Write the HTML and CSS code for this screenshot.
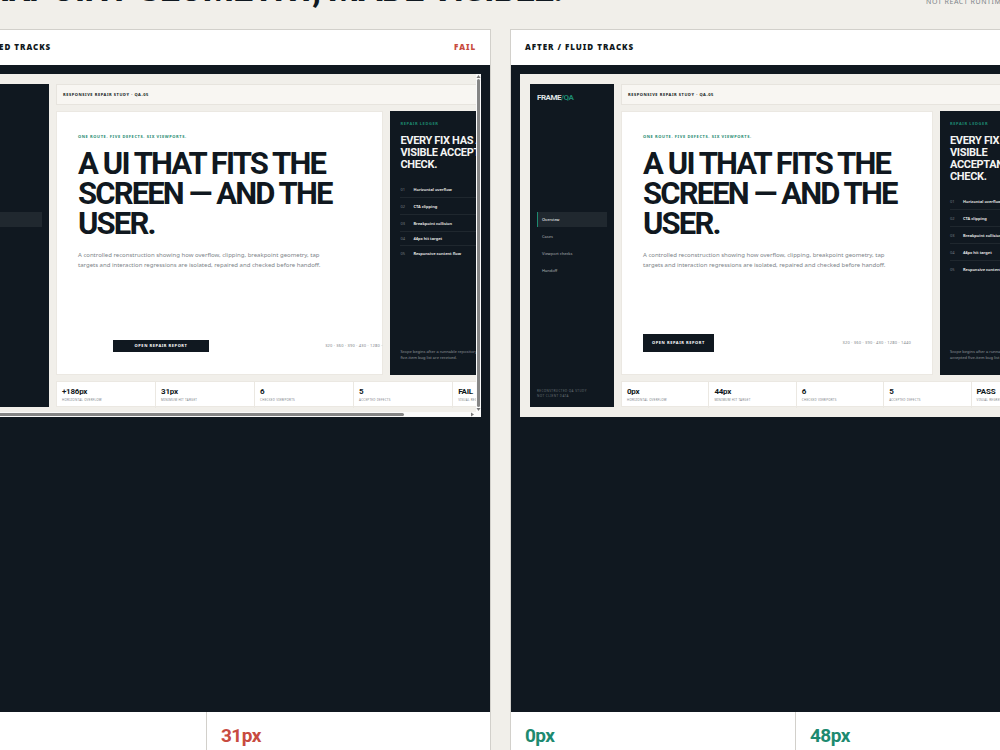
FILE: index.html
```
<!DOCTYPE html>
<html lang="en">
<head>
    <meta charset="UTF-8">
    <meta name="viewport" content="width=device-width, initial-scale=1.0">
    <title>Frame/QA - Breakpoint Geometry</title>
    <link rel="stylesheet" href="styles.css">
</head>
<body>
    <main class="board">
        <header class="board-header">
            <h1>BREAKPOINT GEOMETRY, MADE VISIBLE.</h1>
            <p class="board-note">NOT REACT RUNTIME</p>
        </header>

        <div class="comparison">
            <!-- Before -->
            <section class="panel">
                <div class="panel-header">
                    <h2>BEFORE / FIXED TRACKS</h2>
                    <span class="fail">FAIL</span>
                </div>
                <div class="stage">
                    <div class="preview preview-scroll">
                        <div class="viewport">
                            <div class="app app-fixed">
                                <aside class="sidebar">
                                    <div class="brand">FRAME<span>/QA</span></div>
                                    <nav class="nav">
                                        <a class="active" href="#">Overview</a>
                                        <a href="#">Cases</a>
                                        <a href="#">Viewport checks</a>
                                        <a href="#">Handoff</a>
                                    </nav>
                                    <p class="side-note">RECONSTRUCTED QA STUDY<br>NOT CLIENT DATA</p>
                                </aside>
                                <div class="content">
                                    <div class="topbar">RESPONSIVE REPAIR STUDY · QA-05</div>
                                    <div class="tracks">
                                        <article class="hero">
                                            <p class="eyebrow">ONE ROUTE. FIVE DEFECTS. SIX VIEWPORTS.</p>
                                            <h3>A UI THAT FITS THE<br>SCREEN — AND THE<br>USER.</h3>
                                            <p class="lead">A controlled reconstruction showing how overflow, clipping, breakpoint geometry, tap<br>targets and interaction regressions are isolated, repaired and checked before handoff.</p>
                                            <div class="hero-footer">
                                                <button class="report">OPEN REPAIR REPORT</button>
                                                <span class="sizes">320 · 360 · 390 · 430 · 1280 ·</span>
                                            </div>
                                        </article>
                                        <aside class="ledger">
                                            <p class="eyebrow">REPAIR LEDGER</p>
                                            <h4>EVERY FIX HAS A<br>VISIBLE ACCEPTANCE<br>CHECK.</h4>
                                            <ol>
                                                <li><span>01</span>Horizontal overflow</li>
                                                <li><span>02</span>CTA clipping</li>
                                                <li><span>03</span>Breakpoint collision</li>
                                                <li class="tight"><span>04</span>44px hit target</li>
                                                <li class="tight"><span>05</span>Responsive content flow</li>
                                            </ol>
                                            <p class="scope">Scope begins after a runnable repository, accepted<br>five-item bug list are received.</p>
                                        </aside>
                                    </div>
                                    <div class="metrics">
                                        <div><strong>+186px</strong><small>HORIZONTAL OVERFLOW</small></div>
                                        <div><strong>31px</strong><small>MINIMUM HIT TARGET</small></div>
                                        <div><strong>6</strong><small>CHECKED VIEWPORTS</small></div>
                                        <div><strong>5</strong><small>ACCEPTED DEFECTS</small></div>
                                        <div><strong>FAIL</strong><small>VISUAL REGRESSION</small></div>
                                    </div>
                                </div>
                            </div>
                        </div>
                        <div class="bar-y">
                            <svg viewBox="0 0 5 5"><path d="M0.5 4 2.5 1 4.5 4Z"/></svg>
                            <div class="thumb"></div>
                            <svg viewBox="0 0 5 5"><path d="M0.5 1 2.5 4 4.5 1Z"/></svg>
                        </div>
                        <div class="bar-x">
                            <div class="thumb"></div>
                            <svg viewBox="0 0 5 5"><path d="M1 0.5 4 2.5 1 4.5Z"/></svg>
                        </div>
                    </div>
                </div>
                <div class="results fail">
                    <div>186px</div>
                    <div>31px</div>
                </div>
            </section>

            <!-- After -->
            <section class="panel">
                <div class="panel-header">
                    <h2>AFTER / FLUID TRACKS</h2>
                    <span class="pass">PASS</span>
                </div>
                <div class="stage">
                    <div class="preview">
                        <div class="app">
                            <aside class="sidebar">
                                <div class="brand">FRAME<span>/QA</span></div>
                                <nav class="nav">
                                    <a class="active" href="#">Overview</a>
                                    <a href="#">Cases</a>
                                    <a href="#">Viewport checks</a>
                                    <a href="#">Handoff</a>
                                </nav>
                                <p class="side-note">RECONSTRUCTED QA STUDY<br>NOT CLIENT DATA</p>
                            </aside>
                            <div class="content">
                                <div class="topbar">RESPONSIVE REPAIR STUDY · QA-05</div>
                                <div class="tracks">
                                    <article class="hero">
                                        <p class="eyebrow">ONE ROUTE. FIVE DEFECTS. SIX VIEWPORTS.</p>
                                        <h3>A UI THAT FITS THE<br>SCREEN — AND THE<br>USER.</h3>
                                        <p class="lead">A controlled reconstruction showing how overflow, clipping, breakpoint geometry, tap<br>targets and interaction regressions are isolated, repaired and checked before handoff.</p>
                                        <div class="hero-footer">
                                            <button class="report">OPEN REPAIR REPORT</button>
                                            <span class="sizes">320 · 360 · 390 · 430 · 1280 · 1440</span>
                                        </div>
                                    </article>
                                    <aside class="ledger">
                                        <p class="eyebrow">REPAIR LEDGER</p>
                                        <h4>EVERY FIX HAS A VISIBLE ACCEPTANCE CHECK.</h4>
                                        <ol>
                                            <li><span>01</span>Horizontal overflow</li>
                                            <li><span>02</span>CTA clipping</li>
                                            <li><span>03</span>Breakpoint collision</li>
                                            <li><span>04</span>44px hit target</li>
                                            <li><span>05</span>Responsive content flow</li>
                                        </ol>
                                        <p class="scope">Scope begins after a runnable repository,<br>accepted five-item bug list are received.</p>
                                    </aside>
                                </div>
                                <div class="metrics">
                                    <div><strong>0px</strong><small>HORIZONTAL OVERFLOW</small></div>
                                    <div><strong>44px</strong><small>MINIMUM HIT TARGET</small></div>
                                    <div><strong>6</strong><small>CHECKED VIEWPORTS</small></div>
                                    <div><strong>5</strong><small>ACCEPTED DEFECTS</small></div>
                                    <div><strong>PASS</strong><small>VISUAL REGRESSION</small></div>
                                </div>
                            </div>
                        </div>
                    </div>
                </div>
                <div class="results pass">
                    <div>0px</div>
                    <div>48px</div>
                </div>
            </section>
        </div>
    </main>
</body>
</html>
```
FILE: styles.css
```
:root {
    --ink: #101820;
    --paper: #f1efea;
    --line: #d2d0cb;
    --muted: #7d8489;
    --red: #c84b40;
    --green: #1d8a70;
    --display: Roboto, "Liberation Sans", sans-serif;
}

* {
    box-sizing: border-box;
    margin: 0;
    padding: 0;
}

body {
    font-family: "Noto Sans", "Open Sans", sans-serif;
    background-color: var(--paper);
    color: var(--ink);
    height: 100vh;
    overflow: hidden;
}

/* The board runs past the window on every side */
.board {
    margin: -40px -80px 0 -79px;
}

.board-header {
    display: flex;
    justify-content: space-between;
    align-items: flex-end;
    height: 69px;
    padding-bottom: 19px;
}

h1 {
    font-family: var(--display);
    font-size: 36px;
    line-height: 42px;
    letter-spacing: -0.03em;
    white-space: nowrap;
}

.board-note {
    width: 154px;
    padding-bottom: 3px;
    font-size: 7px;
    line-height: 10px;
    letter-spacing: 0.08em;
    color: var(--muted);
}

.comparison {
    display: grid;
    grid-template-columns: 1fr 1fr;
    gap: 19px;
}

.panel {
    min-width: 0;
    background: #fff;
    border: 1px solid var(--line);
}

.panel-header {
    display: flex;
    justify-content: space-between;
    align-items: center;
    height: 35px;
    padding: 0 14px 2px;
    font-size: 8px;
    font-weight: 900;
    letter-spacing: 0.12em;
}

.panel-header h2 {
    font-size: 8px;
    font-weight: 900;
}

.fail {
    color: var(--red);
}

.pass {
    color: var(--green);
}

.stage {
    min-height: 647px;
    padding: 9px;
    background: var(--ink);
}

.preview {
    aspect-ratio: 1440 / 898;
    background: var(--paper);
    overflow: hidden;
}

.preview-scroll {
    display: grid;
    grid-template-columns: 1fr 5px;
    grid-template-rows: 1fr 5px;
}

.viewport {
    min-width: 0;
    min-height: 0;
    overflow: hidden;
}

.bar-y,
.bar-x {
    display: flex;
    align-items: center;
    background: #fafafa;
}

.bar-y {
    flex-direction: column;
}

.bar-x {
    grid-column: 1 / 3;
    padding-right: 6px;
}

.thumb {
    background: #858585;
    border-radius: 2px;
}

.bar-y .thumb {
    flex: 1;
    width: 3px;
}

.bar-x .thumb {
    width: 87%;
    height: 3px;
}

.bar-x svg {
    margin-left: auto;
}

.bar-y svg,
.bar-x svg {
    width: 5px;
    height: 5px;
    fill: #777;
}

/* Miniature app */
.app {
    display: grid;
    grid-template-columns: 84px 1fr;
    gap: 7px;
    height: 100%;
    padding: 10px;
}

.app-fixed {
    width: 116%;
    grid-template-columns: 108px 1fr;
    padding-bottom: 5px;
}

.sidebar {
    display: flex;
    flex-direction: column;
    justify-content: space-between;
    padding: 8px 7px;
    background: var(--ink);
    color: #dfe2e3;
}

.brand {
    font-family: var(--display);
    font-size: 8px;
    line-height: 11px;
    font-weight: bold;
    letter-spacing: -0.06em;
}

.brand span {
    color: var(--green);
}

.nav a {
    display: flex;
    align-items: center;
    height: 15px;
    margin-bottom: 2px;
    padding-left: 5px;
    font-size: 4px;
    color: #aeb3b6;
    text-decoration: none;
}

.nav .active {
    padding-left: 4px;
    background: #20282f;
    border-left: 1px solid var(--green);
    color: #fff;
}

.side-note {
    font-size: 3px;
    line-height: 5px;
    letter-spacing: 0.15em;
    color: #6a7277;
}

.content {
    display: grid;
    grid-template-rows: 21px 1fr 26px;
    gap: 6px;
    min-width: 0;
}

.topbar {
    display: flex;
    align-items: center;
    padding-left: 6px;
    background: #f8f6f2;
    border: 1px solid #e7e4de;
    font-size: 4px;
    font-weight: 700;
    letter-spacing: 0.14em;
}

.tracks {
    display: grid;
    grid-template-columns: 312fr 120fr;
    gap: 7px;
}

.app-fixed .tracks {
    grid-template-columns: 326fr 162fr;
}

.hero {
    display: flex;
    flex-direction: column;
    min-width: 0;
    padding: 22px 21px;
    background: #fff;
    border: 1px solid #ebe8e2;
}

.eyebrow {
    font-size: 4px;
    line-height: 6px;
    font-weight: 700;
    letter-spacing: 0.15em;
    color: var(--green);
    white-space: nowrap;
}

.hero h3 {
    margin-top: 9px;
    font-family: var(--display);
    font-size: 31px;
    line-height: 30px;
    letter-spacing: -0.06em;
    white-space: nowrap;
}

.lead {
    margin-top: 11px;
    font-size: 6px;
    line-height: 10px;
    color: var(--muted);
    white-space: nowrap;
}

.hero-footer {
    display: flex;
    justify-content: space-between;
    align-items: center;
    margin-top: auto;
}

.report {
    height: 18px;
    padding: 0 9px;
    background: var(--ink);
    border: none;
    color: #fff;
    font-family: inherit;
    font-size: 4px;
    font-weight: 700;
    letter-spacing: 0.14em;
    cursor: pointer;
}

.app-fixed .report {
    width: 96px;
    height: 12px;
    margin-left: 35px;
}

.app-fixed .hero-footer {
    margin-right: -21px;
}

.sizes {
    font-size: 4px;
    letter-spacing: 0.05em;
    color: var(--muted);
    white-space: nowrap;
}

.ledger {
    display: flex;
    flex-direction: column;
    min-width: 0;
    padding: 10px;
    background: var(--ink);
    color: #f4f4f2;
}

.ledger h4 {
    margin-top: 8px;
    font-family: var(--display);
    font-size: 11px;
    line-height: 12px;
    letter-spacing: -0.03em;
}

.ledger ol {
    margin-top: 10px;
    list-style: none;
}

.ledger li {
    display: flex;
    align-items: center;
    height: 17px;
    border-bottom: 1px solid #1f272e;
    font-size: 4px;
    font-weight: 600;
    white-space: nowrap;
}

.ledger .tight {
    height: 14px;
}

.ledger li:last-child {
    border-bottom: none;
}

.ledger li span {
    width: 13px;
    font-weight: 400;
    color: #737b80;
}

.scope {
    margin-top: auto;
    padding-bottom: 4px;
    font-size: 4px;
    line-height: 6px;
    color: #90979b;
    white-space: nowrap;
}

.metrics {
    display: grid;
    grid-template-columns: repeat(5, 1fr);
    background: #fff;
    border: 1px solid #ebe8e2;
}

.metrics div {
    padding: 5px;
    border-right: 1px solid #ebe8e2;
}

.metrics div:last-child {
    border-right: none;
}

.metrics strong,
.metrics small {
    display: block;
    white-space: nowrap;
}

.metrics strong {
    font-family: var(--display);
    font-size: 8px;
    line-height: 10px;
    letter-spacing: -0.03em;
}

.metrics small {
    font-size: 3px;
    line-height: 6px;
    letter-spacing: 0.08em;
    color: var(--muted);
}

.results {
    display: grid;
    grid-template-columns: 1fr 1fr;
    font-family: var(--display);
    font-size: 19px;
    font-weight: bold;
    line-height: 24px;
    letter-spacing: -0.03em;
}

.results div {
    height: 70px;
    padding: 12px 14px;
}

.results div + div {
    border-left: 1px solid var(--line);
}
```
